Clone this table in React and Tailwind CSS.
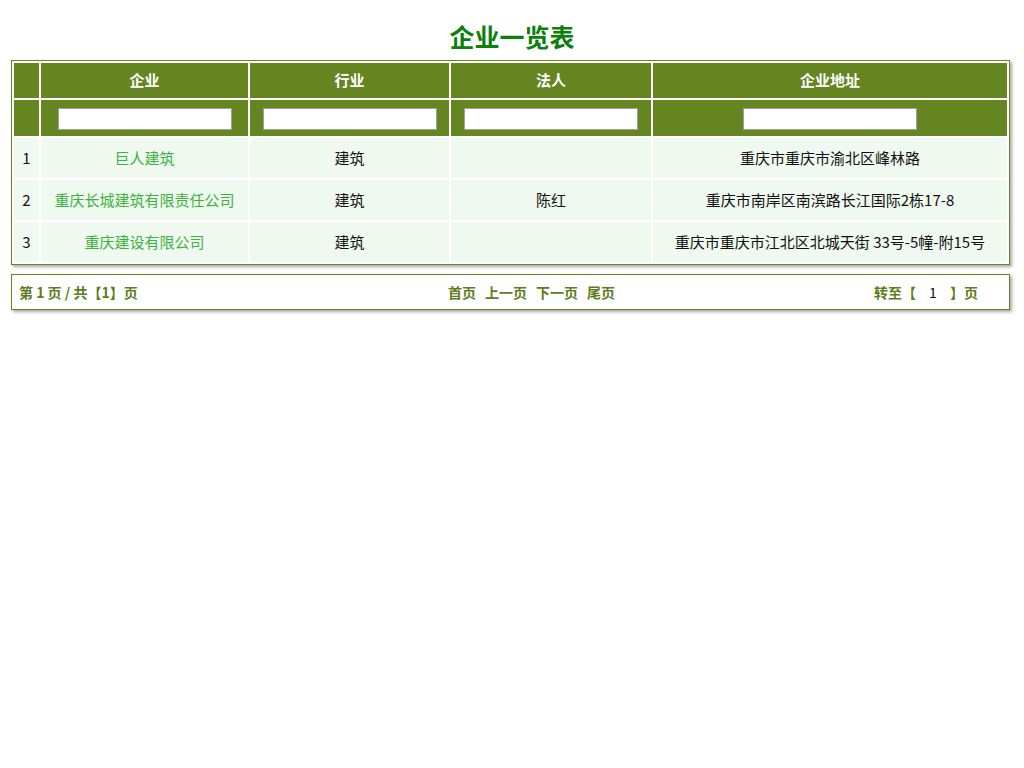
const rows = [
  { no: 1, name: '巨人建筑', trade: '建筑', person: '', addr: '重庆市重庆市渝北区峰林路' },
  { no: 2, name: '重庆长城建筑有限责任公司', trade: '建筑', person: '陈红', addr: '重庆市南岸区南滨路长江国际2栋17-8' },
  { no: 3, name: '重庆建设有限公司', trade: '建筑', person: '', addr: '重庆市重庆市江北区北城天街 33号-5幢-附15号' },
];

const font = { fontFamily: '"Noto Sans CJK SC", "Noto Sans", sans-serif' };

function FilterInput() {
  return <input type="text" className="w-[174px] h-[22px] bg-white border border-[#a0a0a0] outline-none align-middle" />;
}

export default function App() {
  return (
    <div className="w-[1024px] min-h-[768px] bg-white" style={font}>
      <h1 className="text-center text-[25px] leading-[34px] font-bold text-[#0b800b] pt-[19px] pb-[7px]">企业一览表</h1>

      <div className="ml-[11px] w-[999px] border border-[#64851f] shadow-[2px_2px_3px_#a8a8a8]">
        <table className="w-full table-fixed border-separate border-spacing-[2px] text-[15px] text-[#111]">
          <colgroup>
            <col className="w-[25px]" />
            <col className="w-[207px]" />
            <col className="w-[199px]" />
            <col className="w-[200px]" />
            <col />
          </colgroup>
          <thead>
            <tr className="h-[35px] bg-[#64851f] text-white font-bold">
              <th></th>
              <th>企业</th>
              <th>行业</th>
              <th>法人</th>
              <th>企业地址</th>
            </tr>
            <tr className="h-[36px] bg-[#64851f]">
              <th></th>
              <th><FilterInput /></th>
              <th><FilterInput /></th>
              <th><FilterInput /></th>
              <th><FilterInput /></th>
            </tr>
          </thead>
          <tbody>
            {rows.map((r) => (
              <tr key={r.no} className="h-[40px] bg-[#eff9f0] text-center">
                <td>{r.no}</td>
                <td className="text-[#3db33d]">{r.name}</td>
                <td>{r.trade}</td>
                <td>{r.person}</td>
                <td className="whitespace-nowrap">{r.addr}</td>
              </tr>
            ))}
          </tbody>
        </table>
      </div>

      <div className="ml-[11px] mt-[9px] w-[999px] h-[36px] border border-[#64851f] shadow-[2px_2px_3px_#a8a8a8] flex items-center text-[14px] font-bold text-[#5e7d1c]">
        <div className="w-[436px] pl-[7px]">第 1 页 / 共【1】页</div>
        <div className="flex gap-[9px]">
          <span>首页</span>
          <span>上一页</span>
          <span>下一页</span>
          <span>尾页</span>
        </div>
        <div className="ml-auto pr-[31px] flex items-center">
          <span>转至【</span>
          <input type="text" defaultValue="1" className="w-[34px] text-center font-normal text-[#111] outline-none bg-transparent" />
          <span>】页</span>
        </div>
      </div>
    </div>
  );
}
